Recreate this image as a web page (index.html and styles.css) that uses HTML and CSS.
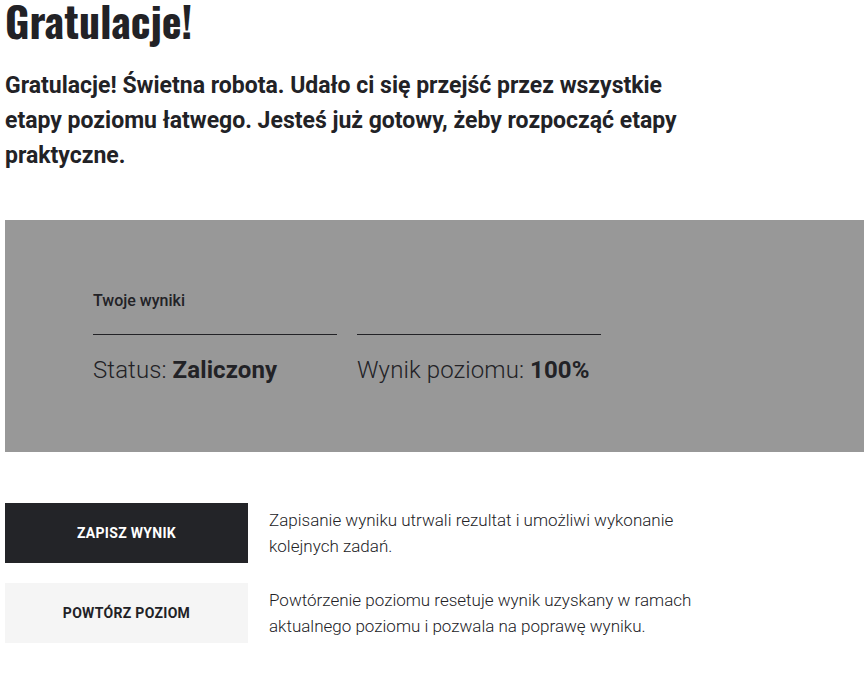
FILE: index.html
```html
<!DOCTYPE html>
<html lang="pl">
<head>
    <meta charset="UTF-8">
    <meta name="viewport" content="width=device-width, initial-scale=1.0">
    <title>Gratulacje!</title>
    <link rel="stylesheet" href="styles.css">
</head>
<body>
    <div class="page">
        <h1 class="title">Gratulacje!</h1>
        <p class="lead">Gratulacje! Świetna robota. Udało ci się przejść przez wszystkie etapy poziomu łatwego. Jesteś już gotowy, żeby rozpocząć etapy praktyczne.</p>

        <div class="results">
            <div class="results-label">Twoje wyniki</div>
            <div class="results-row">
                <div class="result-col">Status: <strong>Zaliczony</strong></div>
                <div class="result-col">Wynik poziomu: <strong>100%</strong></div>
            </div>
        </div>

        <div class="actions">
            <div class="action">
                <button class="btn btn-dark">Zapisz wynik</button>
                <p class="action-text">Zapisanie wyniku utrwali rezultat i umożliwi wykonanie kolejnych zadań.</p>
            </div>
            <div class="action">
                <button class="btn btn-light">Powtórz poziom</button>
                <p class="action-text">Powtórzenie poziomu resetuje wynik uzyskany w ramach aktualnego poziomu i pozwala na poprawę wyniku.</p>
            </div>
        </div>
    </div>
</body>
</html>
```

FILE: styles.css
```css
body {
    margin: 0;
    font-family: 'Roboto', 'Liberation Sans', sans-serif;
    color: #222226;
    background: #fff;
    overflow: hidden;
}

.page {
    padding-left: 5px;
}

.title {
    font-family: 'Oswald', 'Liberation Sans Narrow', 'DejaVu Sans Condensed', sans-serif;
    font-weight: 700;
    font-size: 42px;
    line-height: 40px;
    margin: 0;
    color: #222226;
}

.lead {
    font-size: 23px;
    font-weight: 700;
    line-height: 35px;
    max-width: 690px;
    margin: 28px 0 0;
}

.results {
    background: #989898;
    height: 232px;
    margin-top: 47px;
    box-sizing: border-box;
    padding: 71px 0 0 88px;
}

.results-label {
    font-size: 16px;
    font-weight: 500;
    line-height: 20px;
    padding-bottom: 23px;
    width: 244px;
    border-bottom: 1px solid #222226;
}

.results-row {
    display: flex;
    gap: 20px;
    margin-top: -1px;
}

.result-col {
    width: 244px;
    border-top: 1px solid #222226;
    padding-top: 20px;
    font-size: 24px;
    font-weight: 300;
    letter-spacing: 0.1px;
    line-height: 30px;
}

.result-col:first-child {
    border-top-color: transparent;
}

.result-col strong {
    font-weight: 700;
}

.actions {
    margin-top: 51px;
    display: flex;
    flex-direction: column;
    gap: 20px;
}

.action {
    display: flex;
    align-items: flex-start;
    gap: 21px;
}

.btn {
    width: 243px;
    height: 60px;
    border: none;
    font-family: 'Roboto', sans-serif;
    font-size: 14px;
    font-weight: 700;
    letter-spacing: 0.3px;
    text-transform: uppercase;
    cursor: pointer;
    flex-shrink: 0;
}

.btn-dark {
    background: #232428;
    color: #fff;
}

.btn-light {
    background: #f5f5f5;
    color: #222226;
}

.action-text {
    margin: 4px 0 0;
    max-width: 440px;
    font-size: 17px;
    font-weight: 300;
    line-height: 26px;
}
```
